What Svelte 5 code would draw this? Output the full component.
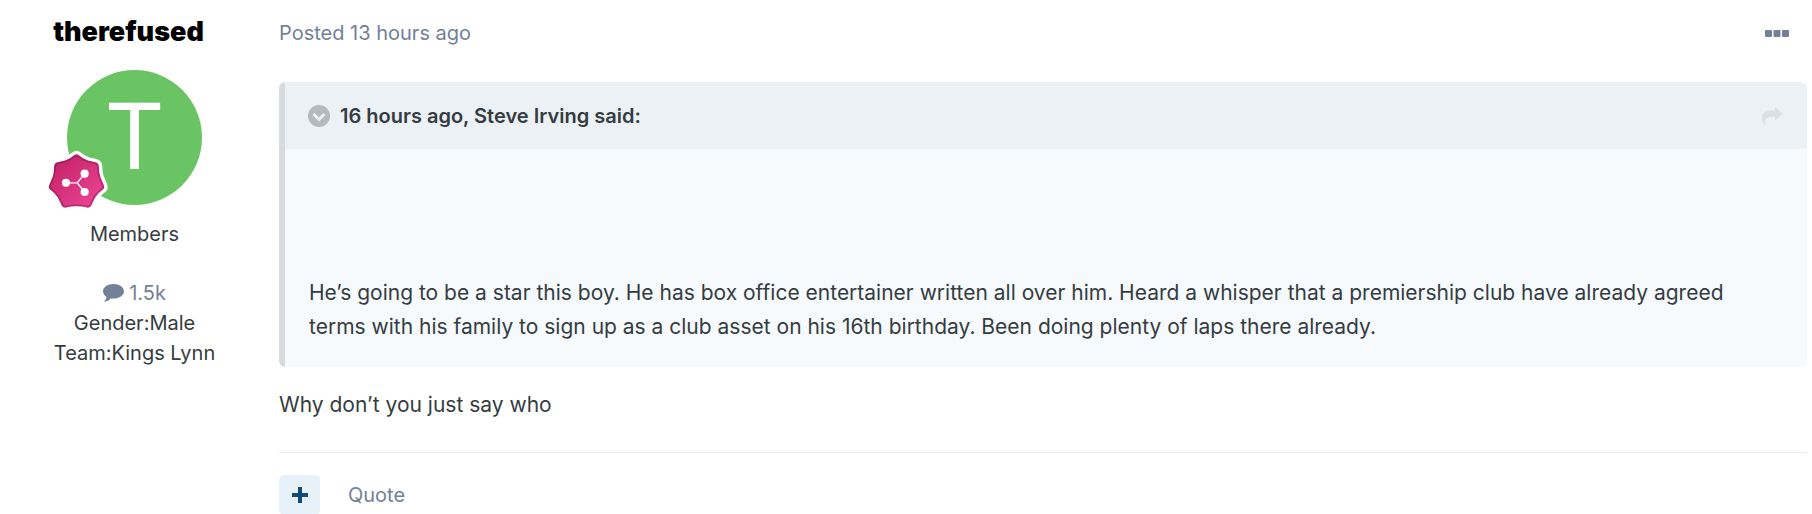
<script>
	const author = {
		name: 'therefused',
		group: 'Members',
		posts: '1.5k',
		fields: [
			{ label: 'Gender', value: 'Male' },
			{ label: 'Team', value: 'Kings Lynn' }
		]
	};

	const quote = {
		citation: '16 hours ago, Steve Irving said:',
		text: 'He’s going to be a star this boy. He has box office entertainer written all over him. Heard a whisper that a premiership club have already agreed terms with his family to sign up as a club asset on his 16th birthday. Been doing plenty of laps there already.'
	};

	let expanded = $state(true);
	let multiQuote = $state(false);
</script>

<article class="post">
	<aside class="author">
		<h3 class="author-name"><a href="#profile">{author.name}</a></h3>
		<div class="avatar">
			<a class="avatar-photo" href="#profile" aria-label="View profile">{author.name[0].toUpperCase()}</a>
			<svg class="rank" viewBox="0 0 180 180" role="img" aria-label="Rank">
				<defs>
					<linearGradient id="rank-fill" x1="0" y1="0" x2="1" y2="1">
						<stop offset="0" stop-color="#c01f63" />
						<stop offset="1" stop-color="#ee4798" />
					</linearGradient>
					<linearGradient id="rank-edge" x1="0" y1="0" x2="1" y2="1">
						<stop offset="0" stop-color="#9c1a54" />
						<stop offset="1" stop-color="#c5347c" />
					</linearGradient>
					<path id="rank-shape" d="M84 9Q90 4 96 9Q108 20 124 25L149 31Q156 34 156 42Q156 58 160 72L171 99Q174 106 168 111Q154 121 145 134L133 159Q129 165 121 164Q106 160 90 160Q74 160 59 164Q51 165 47 159L35 134Q26 121 12 111Q6 106 9 99L20 72Q24 58 24 42Q24 34 31 31L56 25Q72 20 84 9Z" />
				</defs>
				<use href="#rank-shape" fill="#fff" stroke="#fff" stroke-width="20" stroke-linejoin="round" />
				<use href="#rank-shape" fill="url(#rank-edge)" />
				<use href="#rank-shape" fill="url(#rank-fill)" transform="translate(7 7) scale(.92)" />
				<path d="M60 91H92L114 64M92 91L114 118" fill="none" stroke="#fff" stroke-width="4" />
				<circle cx="59" cy="91" r="12" fill="#fff" />
				<circle cx="114" cy="64" r="12" fill="#fff" />
				<circle cx="114" cy="118" r="12" fill="#fff" />
			</svg>
		</div>
		<ul class="stats">
			<li class="group">{author.group}</li>
			<li>
				<a class="count" href="#posts" title="Posts">
					<svg width="21" height="18" viewBox="0 0 21 18" aria-hidden="true">
						<path d="M10.500 0C16.300 0 21 3.200 21 7.300S16.300 14.600 10.500 14.600C9.600 14.600 8.700 14.500 7.900 14.400C6 16.300 4 17.300 1.800 17.500C1.400 17.500 1.300 17 1.600 16.700C2.600 15.700 3.300 14.500 3.500 12.900C1.300 11.500 0 9.500 0 7.300C0 3.200 4.700 0 10.500 0Z" fill="currentColor" />
					</svg>
					{author.posts}
				</a>
			</li>
			{#each author.fields as field}
				<li>{field.label}:{field.value}</li>
			{/each}
		</ul>
	</aside>

	<div class="main">
		<header class="meta">
			<a href="#post">Posted <time>13 hours ago</time></a>
			<button class="more" aria-label="More options">
				<svg width="24" height="7" viewBox="0 0 24 7" aria-hidden="true">
					<rect width="7" height="7" rx="1" />
					<rect x="8.500" width="7" height="7" rx="1" />
					<rect x="17" width="7" height="7" rx="1" />
				</svg>
			</button>
		</header>

		<blockquote class="quote">
			<div class="citation">
				<button class="toggle" aria-label="Toggle quote" aria-expanded={expanded} onclick={() => (expanded = !expanded)}>
					<svg width="22" height="22" viewBox="0 0 22 22" aria-hidden="true">
						<circle cx="11" cy="11" r="11" fill="#b5babe" />
						<path d="M5.500 9L11 14.500L16.500 9" fill="none" stroke="#ecf1f5" stroke-width="3" />
					</svg>
				</button>
				<span>{quote.citation}</span>
				<a class="jump" href="#quoted" aria-label="Go to quoted post">
					<svg width="21" height="18" viewBox="0 0 21 18" aria-hidden="true">
						<path d="M13 0L21 6.800L13 13.500V9.800C7 9.600 3.500 10.500 3.200 14C3.100 15.500 3.300 16.700 3.300 17.500C3.200 18 2.700 18 2.400 17.600C1 15.800 0 13.500 0 11C0 5 5 3.500 13 3.500Z" fill="currentColor" />
					</svg>
				</a>
			</div>
			{#if expanded}
				<div class="quote-body">
					<p>{quote.text}</p>
				</div>
			{/if}
		</blockquote>

		<p class="reply">Why don’t you just say who</p>

		<footer class="controls">
			<button class="multi" aria-label="MultiQuote" aria-pressed={multiQuote} onclick={() => (multiQuote = !multiQuote)}>
				<svg width="16" height="16" viewBox="0 0 16 16" aria-hidden="true">
					<path d="M8 1V15M1 8H15" stroke="currentColor" stroke-width="4" stroke-linecap="square" />
				</svg>
			</button>
			<a href="#quote">Quote</a>
		</footer>
	</div>
</article>

<style>
	:global(body) {
		margin: 0;
		background: #fff;
		overflow: hidden;
	}

	.post {
		display: flex;
		font-family: Inter, 'Liberation Sans', sans-serif;
		font-size: 20px;
		line-height: 30px;
		color: #353c41;
	}

	a {
		color: inherit;
		text-decoration: none;
	}

	button {
		display: flex;
		align-items: center;
		justify-content: center;
		padding: 0;
		border: 0;
		background: none;
		color: inherit;
		cursor: pointer;
	}

	svg {
		display: block;
	}

	.author {
		display: flex;
		flex: none;
		flex-direction: column;
		align-items: center;
		width: 269px;
		padding-top: 17px;
	}

	.author-name {
		margin: 0 0 23px;
		padding-right: 12px;
		font-size: 27px;
		font-weight: 900;
		color: #000;
	}

	.avatar {
		position: relative;
	}

	.avatar-photo {
		display: block;
		width: 135px;
		height: 135px;
		border-radius: 50%;
		background: #6bc464;
		color: #fff;
		font-family: Roboto, sans-serif;
		font-size: 93px;
		line-height: 135px;
		text-align: center;
	}

	.rank {
		position: absolute;
		top: 82px;
		left: -21px;
		width: 61px;
		height: 61px;
		overflow: visible;
	}

	.stats {
		margin: 14px 0 0;
		padding: 0;
		list-style: none;
		text-align: center;
	}

	.group {
		margin-bottom: 29px;
	}

	.count {
		display: flex;
		align-items: center;
		justify-content: center;
		gap: 5px;
		color: #73809a;
	}

	.main {
		flex: 1;
		min-width: 0;
		padding: 18px 5px 0 10px;
	}

	.meta {
		display: flex;
		align-items: center;
		justify-content: space-between;
		margin-bottom: 34px;
		color: #73809a;
	}

	.more {
		margin-right: 18px;
		fill: currentColor;
	}

	.quote {
		margin: 0;
		border-left: 6px solid #d7dbe0;
		border-radius: 6px;
		background: #f6fafd;
		overflow: hidden;
	}

	.citation {
		display: flex;
		align-items: center;
		gap: 10px;
		height: 67px;
		padding: 0 24px 0 23px;
		background: #ecf1f5;
		font-weight: 600;
	}

	.jump {
		margin-left: auto;
		color: #dae0e4;
	}

	.quote-body {
		padding: 127px 24px 23px;
		font-size: 21px;
		line-height: 34px;
	}

	.quote-body p {
		margin: 0;
	}

	.reply {
		margin: 21px 0 30px;
		font-size: 21px;
		line-height: 34px;
	}

	.controls {
		display: flex;
		align-items: center;
		gap: 28px;
		padding-top: 22px;
		border-top: 1px solid #e8eaeb;
		color: #73809a;
	}

	.multi {
		width: 41px;
		height: 40px;
		border-radius: 5px;
		background: #e7f1fa;
		color: #0f4c7c;
	}
</style>
